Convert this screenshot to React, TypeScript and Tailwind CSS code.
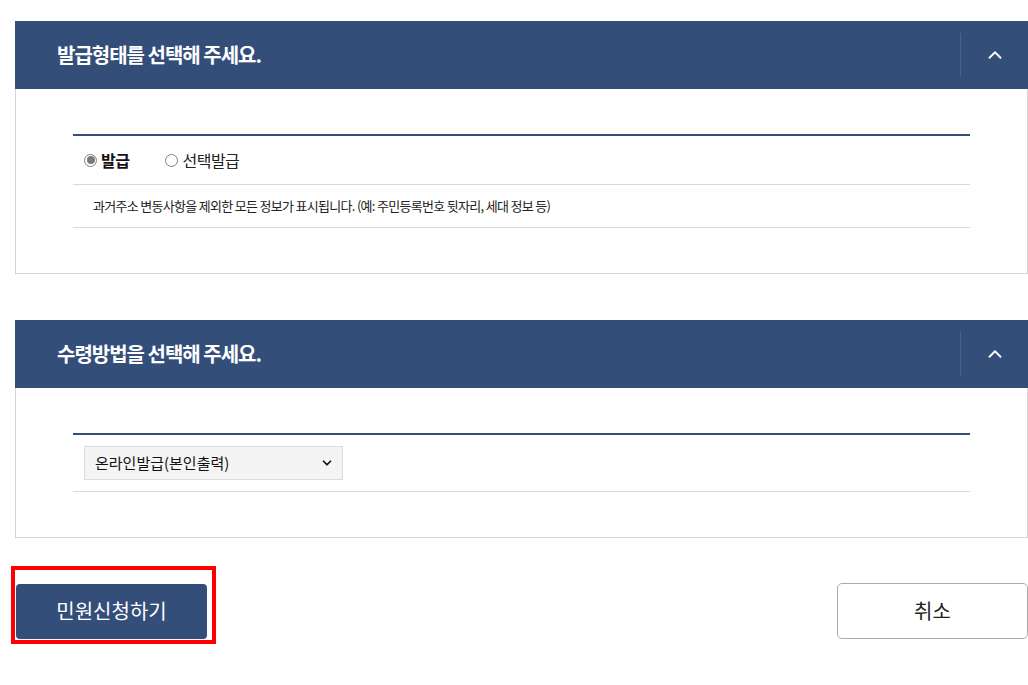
import { ChevronUp, ChevronDown } from "lucide-react";

const font = { fontFamily: '"Noto Sans CJK KR", "Noto Sans", sans-serif' };

function PanelHeader({ title }: { title: string }) {
  return (
    <div className="flex h-[68px] items-center bg-[#344e7a] text-white">
      <h2 className="flex-1 pl-[42px] text-[20px] font-bold tracking-[-1px]">{title}</h2>
      <div className="h-[44px] w-px bg-[#4a6290]" />
      <div className="flex w-[67px] items-center justify-center">
        <ChevronUp className="h-[22px] w-[22px]" strokeWidth={2} />
      </div>
    </div>
  );
}

function Radio({ checked, label }: { checked?: boolean; label: string }) {
  return (
    <label className="flex items-center gap-[4px]">
      <span className="flex h-[13px] w-[13px] items-center justify-center rounded-full border border-[#808080]">
        {checked && <span className="h-[8px] w-[8px] rounded-full bg-[#7a7a7a]" />}
      </span>
      <span className={checked ? "text-[16px] font-bold tracking-[-0.5px] text-[#111]" : "text-[16px] tracking-[-0.5px] text-[#222]"}>{label}</span>
    </label>
  );
}

export default function App() {
  return (
    <div className="min-h-screen bg-white pl-[15px] pt-[21px]" style={font}>
      <section>
        <PanelHeader title="발급형태를 선택해 주세요." />
        <div className="border border-t-0 border-[#d4d4d4] px-[57px] pb-[45px] pt-[45px]">
          <div className="border-t-2 border-[#344e7a]">
            <div className="flex h-[49px] items-center gap-[36px] border-b border-[#d9d9d9] pl-[11px]">
              <Radio checked label="발급" />
              <Radio label="선택발급" />
            </div>
            <div className="flex h-[43px] items-center border-b border-[#d9d9d9] pl-[20px] text-[13px] tracking-[-0.7px] text-[#222]">
              과거주소 변동사항을 제외한 모든 정보가 표시됩니다. (예: 주민등록번호 뒷자리, 세대 정보 등)
            </div>
          </div>
        </div>
      </section>

      <section className="mt-[46px]">
        <PanelHeader title="수령방법을 선택해 주세요." />
        <div className="border border-t-0 border-[#d4d4d4] px-[57px] pb-[45px] pt-[45px]">
          <div className="border-t-2 border-[#344e7a]">
            <div className="border-b border-[#d9d9d9] pb-[11px] pl-[11px] pt-[11px]">
              <div className="relative w-[259px]">
                <select className="h-[34px] w-full appearance-none border border-[#dcdcdc] bg-[#f4f4f4] pl-[10px] text-[15px] text-[#111] outline-none">
                  <option>온라인발급(본인출력)</option>
                </select>
                <ChevronDown className="pointer-events-none absolute right-[9px] top-[10px] h-[14px] w-[14px] text-[#111]" strokeWidth={3} />
              </div>
            </div>
          </div>
        </div>
      </section>

      <div className="mt-[45px] flex items-center justify-between">
        <div className="relative ml-px">
          <div className="pointer-events-none absolute -bottom-[5px] -left-[5px] -right-[9px] -top-[18px] border-[4px] border-[#ff0000]" />
          <button className="relative h-[55px] w-[191px] rounded-[4px] bg-[#344e7a] text-[20px] text-white">민원신청하기</button>
        </div>
        <button className="h-[56px] w-[191px] rounded-[5px] border border-[#aaa] bg-white text-[20px] text-[#222]">취소</button>
      </div>
    </div>
  );
}
